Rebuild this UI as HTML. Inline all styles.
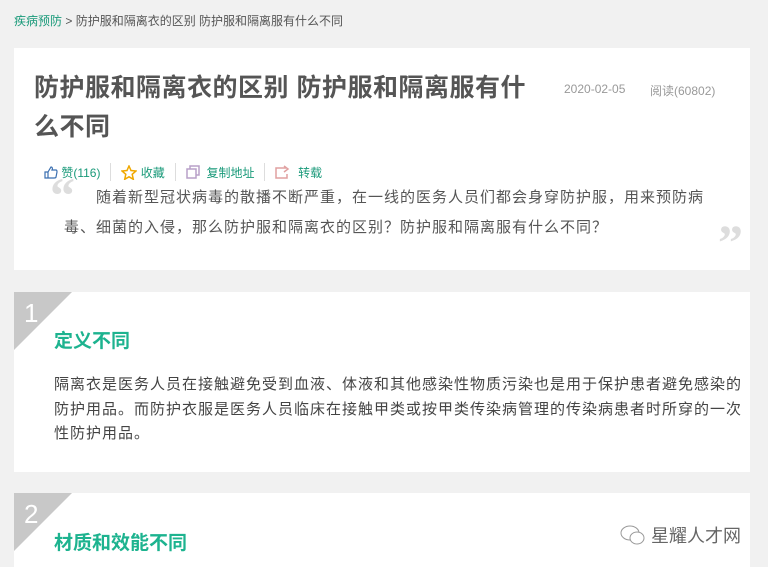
<!DOCTYPE html>
<html><head><meta charset="utf-8"><style>
*{margin:0;padding:0;box-sizing:border-box}
body{width:768px;height:567px;overflow:hidden;background:#f1f1f1;font-family:"Liberation Sans","Noto Sans CJK SC",sans-serif;position:relative}
.bc{position:absolute;left:14px;top:12px;font-size:12px;color:#555}
.bc a{color:#1a9a7a}
.card{position:absolute;left:14px;width:736px;background:#fff}
h1{position:absolute;left:20px;top:21px;width:496px;font-size:25px;letter-spacing:0.5px;line-height:39px;color:#555;font-weight:bold}
.meta{position:absolute;top:34px;font-size:12px;color:#999}
.acts{position:absolute;left:30px;top:115px;font-size:12px;color:#1a9a7a;display:flex;align-items:center}
.acts span{display:flex;align-items:center;padding:0 10px;border-right:1px solid #ddd;height:18px}
.acts span:last-child{border:none}
.acts span:first-child{padding-left:0}
.q{position:absolute;left:50px;top:135px;width:644px;font-size:15px;letter-spacing:1px;line-height:30px;color:#555;text-indent:32px}
.ql,.qr{position:absolute;font-size:50px;color:#ddd;font-weight:bold;font-family:"Liberation Serif",serif}
.tri{position:absolute;left:0;top:0;width:0;height:0;border-top:58px solid #c8c8c8;border-right:58px solid transparent}
.num{position:absolute;left:10px;top:6px;color:#fff;font-size:26px}
h2{position:absolute;left:40px;font-size:19px;color:#1db38f;font-weight:bold}
.p{position:absolute;left:40px;top:81px;width:692px;font-size:15px;letter-spacing:1px;line-height:24.5px;color:#444}
</style></head><body>
<div class="bc"><a>疾病预防</a> &gt; 防护服和隔离衣的区别 防护服和隔离服有什么不同</div>
<div class="card" style="top:48px;height:222px">
<h1>防护服和隔离衣的区别 防护服和隔离服有什么不同</h1>
<div class="meta" style="left:550px">2020-02-05</div>
<div class="meta" style="left:636px">阅读(60802)</div>
<div class="acts">
<span><svg width="14" height="13" viewBox="0 0 14 13"><path d="M1 6h3v6H1zM4 6l3-5c1 0 2 1 1 3h4c1 0 1 1 1 2l-1 5c0 1-1 1-2 1H4" fill="none" stroke="#3a6fb0" stroke-width="1.2"/></svg>&nbsp;赞(116)</span>
<span><svg width="16" height="15" viewBox="0 0 16 15"><path d="M8 1l2 4.5 5 .5-3.8 3.3 1.1 5L8 11.8 3.7 14.3l1.1-5L1 6l5-.5z" fill="none" stroke="#f0a800" stroke-width="1.5"/></svg>&nbsp;收藏</span>
<span><svg width="14" height="14" viewBox="0 0 14 14"><path d="M1 4h9v9H1zM4 4V1h9v9h-3" fill="none" stroke="#b8a0c8" stroke-width="1.5"/></svg>&nbsp;&nbsp;复制地址</span>
<span><svg width="16" height="14" viewBox="0 0 16 14"><path d="M11 3H1v10h11V9M9 1l4 3-4 3" fill="none" stroke="#e0a0a0" stroke-width="1.5"/></svg>&nbsp;&nbsp;转载</span>
</div>
<div class="ql" style="left:36px;top:118px">“</div>
<div class="q">随着新型冠状病毒的散播不断严重，在一线的医务人员们都会身穿防护服，用来预防病毒、细菌的入侵，那么防护服和隔离衣的区别？防护服和隔离服有什么不同？</div>
<div class="qr" style="left:704px;top:165px">”</div>
</div>
<div class="card" style="top:292px;height:180px">
<div class="tri"></div><div class="num">1</div>
<h2 style="top:34px">定义不同</h2>
<div class="p">隔离衣是医务人员在接触避免受到血液、体液和其他感染性物质污染也是用于保护患者避免感染的防护用品。而防护衣服是医务人员临床在接触甲类或按甲类传染病管理的传染病患者时所穿的一次性防护用品。</div>
</div>
<div class="card" style="top:493px;height:74px">
<div class="tri"></div><div class="num">2</div>
<h2 style="top:35px">材质和效能不同</h2>
<div style="position:absolute;left:606px;top:29px;font-size:18px;color:#666;display:flex;align-items:center"><svg width="26" height="22" viewBox="0 0 26 22"><ellipse cx="10" cy="9" rx="9" ry="7" fill="none" stroke="#999"/><ellipse cx="17" cy="14" rx="7" ry="6" fill="#fff" stroke="#999"/></svg>&nbsp;星耀人才网</div>
</div>
</body></html>
